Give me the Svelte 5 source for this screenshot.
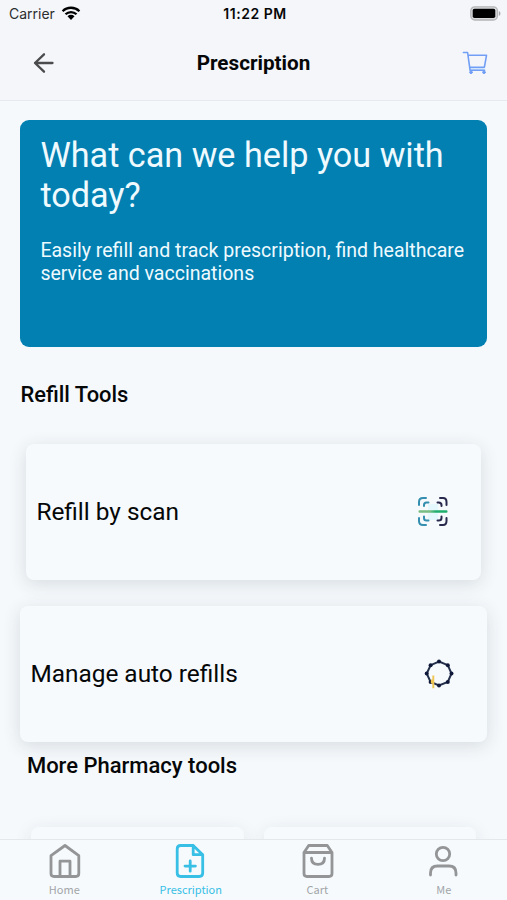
<script lang="ts">
  type Tab = { id: string; label: string };

  const tools = [
    { id: 'scan', label: 'Refill by scan', inset: true },
    { id: 'auto', label: 'Manage auto refills', inset: false }
  ];

  const tabs: Tab[] = [
    { id: 'home', label: 'Home' },
    { id: 'prescription', label: 'Prescription' },
    { id: 'cart', label: 'Cart' },
    { id: 'me', label: 'Me' }
  ];

  // vertices of the octagon in the auto refill icon
  const dots = [
    [15, 2.5], [23.8, 6.2], [27.5, 14.5], [23.8, 23],
    [15, 26.5], [6.6, 23], [2.7, 14.5], [6.6, 6.2]
  ];

  let active = $state('prescription');
</script>

<div class="screen">
  <div class="status-bar">
    <div class="carrier">
      <span>Carrier</span>
      <svg width="20" height="15" viewBox="0 0 20 15">
        <path d="M1.6 5.2a12 12 0 0 1 16.8 0M4.5 8.3a7.8 7.8 0 0 1 11 0" fill="none" stroke="#000" stroke-width="2.3" />
        <path d="M6.5 10.3a5 5 0 0 1 7 0L10 14z" />
      </svg>
    </div>
    <span class="time">11:22 PM</span>
    <svg class="battery" width="31" height="15" viewBox="0 0 31 15">
      <rect x="0.8" y="0.8" width="26.6" height="13.2" rx="4" fill="#d9dadc" stroke="#b4b5b7" stroke-width="1.3" />
      <rect x="2.7" y="2.8" width="22.6" height="9.2" rx="1.8" />
      <path d="M28.8 5v5c2.2-.8 2.2-4.2 0-5z" fill="#a7a8aa" />
    </svg>
  </div>

  <header class="header">
    <button class="icon-btn" aria-label="Back">
      <svg width="22" height="22" viewBox="0 0 22 22" fill="none" stroke="#4b4b4d" stroke-width="2.3" stroke-linecap="round" stroke-linejoin="round">
        <path d="M20.500 11H3M12 2.300 3 11l9 8.700" />
      </svg>
    </button>
    <h1>Prescription</h1>
    <button class="icon-btn end" aria-label="Cart">
      <svg width="26" height="24" viewBox="0 0 26 24" fill="none" stroke="#729ff5" stroke-width="1.6" stroke-linecap="round" stroke-linejoin="round">
        <path d="M8 16.400h14.500v3H8z" fill="#cfe5fc" stroke="none" />
        <path d="M1.400 1.500h4.200l2.500 17.800h14.500M6 4.300h18.500l-2.100 11.900H7.800" />
        <circle cx="9" cy="21.300" r="1.300" fill="#729ff5" stroke-width="1" />
        <circle cx="22" cy="21.300" r="1.300" fill="#729ff5" stroke-width="1" />
      </svg>
    </button>
  </header>

  <main class="content">
    <section class="banner">
      <h2>What can we help you with today?</h2>
      <p>Easily refill and track prescription, find healthcare service and vaccinations</p>
    </section>

    <h3>Refill Tools</h3>

    {#each tools as tool (tool.id)}
      <button class="card" class:inset={tool.inset}>
        <span>{tool.label}</span>
        {#if tool.id === 'scan'}
          <svg width="30" height="30" viewBox="0 0 30 30" fill="none" stroke-width="2" stroke-linecap="round" stroke-linejoin="round">
            <defs>
              <linearGradient id="beam">
                <stop offset="0.4" stop-color="#78bd83" />
                <stop offset="0.6" stop-color="#1fae6c" />
              </linearGradient>
            </defs>
            <path d="M10 7h10v16H10z" fill="#e4f8fd" />
            <g stroke="#338eaf">
              <path d="M1 8V5q0-4 4-4h3M1 21v3q0 4 4 4h3M6 9V8q0-2.500 2.500-2.500h2M6 19.500v1.500q0 2.500 2.500 2.500h2" />
            </g>
            <g stroke="#28294d">
              <path d="M22 1h3q3.500 0 3.500 4v3M28.500 21v3q0 4-3.500 4h-3M19.500 5.500h1q3 0 3 2.500v1M23.500 19.500V21q0 2.500-3 2.500h-1" />
            </g>
            <rect x="0.500" y="13.300" width="29" height="2.500" rx="1" fill="url(#beam)" />
          </svg>
        {:else}
          <svg class="cycle" width="30" height="30" viewBox="0 0 30 30">
            <polygon points={dots.map((d) => d.join(',')).join(' ')} fill="none" stroke="#24304c" stroke-width="2" />
            {#each dots as [x, y]}
              <circle cx={x} cy={y} r="2" fill="#10183a" />
            {/each}
            <path d="M9.300 16.500v12.700M7.800 20.500v4" stroke="#efc653" stroke-width="1.900" />
          </svg>
        {/if}
      </button>
    {/each}

    <h3 class="more">More Pharmacy tools</h3>

    <div class="grid">
      <div class="tile"></div>
      <div class="tile"></div>
    </div>
  </main>

  <nav class="tab-bar">
    {#each tabs as tab (tab.id)}
      <button class="tab" class:active={active === tab.id} onclick={() => (active = tab.id)}>
        <svg width="33" height="36" viewBox="0.5 0 33 36" fill="none" stroke="currentColor" stroke-width="2.8" stroke-linecap="round" stroke-linejoin="round">
          {#if tab.id === 'home'}
            <path d="M3.500 12.700 17.500 2.500l13.800 10.200v17.800q0 3-3 3H6.500q-3 0-3-3zM12.500 33V18.200h10V33" />
          {:else if tab.id === 'prescription'}
            <path d="M19.700 2.500H7.200q-3.500 0-3.500 3.500v24q0 3.500 3.500 3.500h18.500q3.500 0 3.500-3.500V11.700zM19.700 2.500v9.200h9.500M16.700 18v10.200M11.500 23.100h10.400" />
          {:else if tab.id === 'cart'}
            <path d="M3.500 9.500 8.200 2.500h18.600l4.700 7v21q0 3-3 3h-22q-3 0-3-3zM3.500 9.500h28M11 15.200q0 6.200 6.500 6.200t6.500-6.200" />
          {:else}
            <circle cx="16.500" cy="11" r="6.700" />
            <path d="M4 32v-2q0-7 7-7h11.500q7 0 7 7v2" />
          {/if}
        </svg>
        <span>{tab.label}</span>
      </button>
    {/each}
  </nav>
</div>

<style>
  :global(body) {
    margin: 0;
    background: #f5f9fc;
  }

  .screen {
    display: flex;
    flex-direction: column;
    width: 507px;
    height: 900px;
    overflow: hidden;
    background: #f5f9fc;
    color: #060708;
    font-family: Roboto, sans-serif;
  }

  button {
    padding: 0;
    border: none;
    background: none;
    color: inherit;
    font: inherit;
    cursor: pointer;
  }

  svg {
    display: block;
    flex: none;
  }

  h1,
  h2,
  h3,
  p {
    margin: 0;
  }

  .status-bar {
    display: grid;
    grid-template-columns: 1fr auto 1fr;
    align-items: center;
    flex: none;
    height: 26px;
    padding: 0 6px 0 9px;
    background: #f4f6fa;
    font-family: Inter, sans-serif;
    font-size: 14px;
  }

  .carrier {
    display: flex;
    align-items: center;
    gap: 6px;
    color: #2c2d2f;
  }

  .time {
    font-weight: 600;
    letter-spacing: 0.55px;
  }

  .battery {
    justify-self: end;
  }

  .header {
    display: grid;
    grid-template-columns: 1fr auto 1fr;
    align-items: center;
    flex: none;
    box-sizing: border-box;
    height: 75px;
    padding: 0 19px 1px;
    border-bottom: 1px solid #e6eaee;
    background: #f4f6fa;
  }

  .icon-btn {
    justify-self: start;
    margin-left: 13px;
  }

  .icon-btn.end {
    justify-self: end;
    margin-left: 0;
  }

  .header h1 {
    font-size: 20.7px;
    font-weight: 700;
  }

  .content {
    display: flex;
    flex-direction: column;
    flex: 1;
    min-height: 0;
    overflow: hidden;
    padding: 19.4px 19.6px 0 20.4px;
  }

  .banner {
    flex: none;
    box-sizing: border-box;
    height: 227px;
    padding: 14.6px 20px;
    border-radius: 9px;
    background: #0280b2;
    color: #effaff;
  }

  .banner h2 {
    font-size: 34.2px;
    font-weight: 400;
    line-height: 40px;
  }

  .banner p {
    margin-top: 24px;
    font-size: 19.55px;
    line-height: 23px;
  }

  h3 {
    flex: none;
    font-size: 21.9px;
    font-weight: 500;
    line-height: 26px;
  }

  .content > h3 {
    margin-top: 34.6px;
    margin-bottom: 36px;
  }

  .card {
    display: flex;
    align-items: center;
    justify-content: space-between;
    flex: none;
    height: 136px;
    margin-bottom: 26px;
    padding: 0 33px 0 10px;
    border-radius: 8px;
    background: #f6fafd;
    box-shadow: 0 4px 18px rgba(40, 50, 60, 0.14);
    font-size: 24.4px;
  }

  .card.inset {
    margin-right: 6px;
    margin-left: 6px;
  }

  .content > h3.more {
    margin: -15px 0 48px 6.5px;
    font-size: 22px;
  }

  .grid {
    display: grid;
    grid-template-columns: 1fr 1fr;
    gap: 20px;
    padding: 0 11px;
  }

  .tile {
    height: 136px;
    border-radius: 8px;
    background: #f6fafd;
    box-shadow: 0 4px 18px rgba(40, 50, 60, 0.1);
  }

  .tab-bar {
    display: grid;
    grid-template-columns: repeat(4, 126.5px);
    flex: none;
    box-sizing: border-box;
    height: 61px;
    padding-left: 1px;
    border-top: 1px solid #e4e8eb;
    background: #f6fafd;
  }

  .tab {
    display: flex;
    flex-direction: column;
    align-items: center;
    padding-top: 3px;
    color: #939597;
    font-family: 'Noto Sans CJK SC', sans-serif;
    font-size: 11px;
    line-height: 18px;
  }

  .tab span {
    margin-top: 1px;
    color: #a2a5a8;
  }

  .tab.active,
  .tab.active span {
    color: #38bfe5;
  }
</style>
